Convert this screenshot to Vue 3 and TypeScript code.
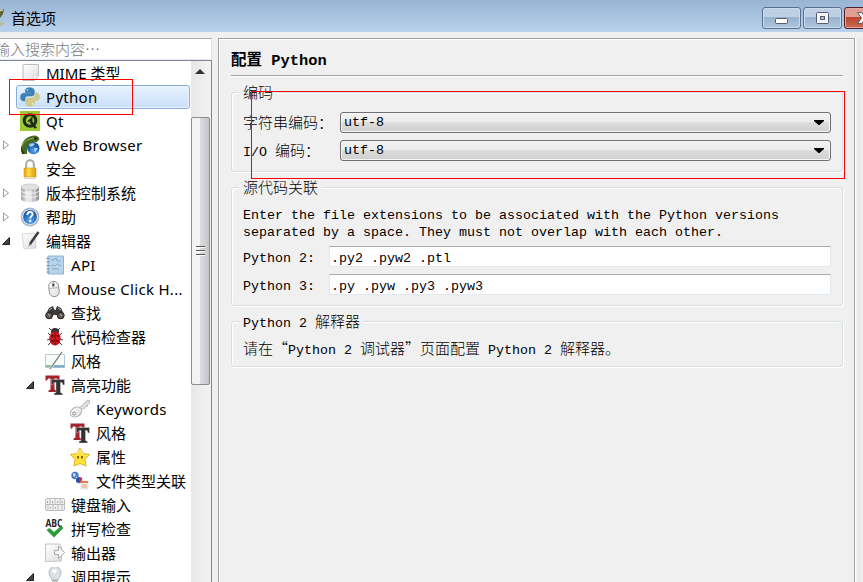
<script setup lang="ts">
import { h, type FunctionalComponent } from 'vue'

interface TreeRow {
  label: string
  icon: string
  level: number
  state?: 'open' | 'closed'
  selected?: boolean
}

const rows: TreeRow[] = [
  { label: 'MIME 类型', icon: 'page', level: 0 },
  { label: 'Python', icon: 'python', level: 0, selected: true },
  { label: 'Qt', icon: 'qt', level: 0 },
  { label: 'Web Browser', icon: 'web', level: 0, state: 'closed' },
  { label: '安全', icon: 'lock', level: 0 },
  { label: '版本控制系统', icon: 'db', level: 0, state: 'closed' },
  { label: '帮助', icon: 'help', level: 0, state: 'closed' },
  { label: '编辑器', icon: 'editor', level: 0, state: 'open' },
  { label: 'API', icon: 'api', level: 1 },
  { label: 'Mouse Click H...', icon: 'mouse', level: 1 },
  { label: '查找', icon: 'find', level: 1 },
  { label: '代码检查器', icon: 'bug', level: 1 },
  { label: '风格', icon: 'style', level: 1 },
  { label: '高亮功能', icon: 'tt', level: 1, state: 'open' },
  { label: 'Keywords', icon: 'key', level: 2 },
  { label: '风格', icon: 'tt', level: 2 },
  { label: '属性', icon: 'star', level: 2 },
  { label: '文件类型关联', icon: 'assoc', level: 2 },
  { label: '键盘输入', icon: 'keyboard', level: 1 },
  { label: '拼写检查', icon: 'spell', level: 1 },
  { label: '输出器', icon: 'export', level: 1 },
  { label: '调用提示', icon: 'bulb', level: 1, state: 'open' },
]

const isLatin = (text: string) => /^[\x20-\x7e]+$/.test(text)

const encodings = [
  { label: '字符串编码：', value: 'utf-8' },
  { label: 'I/O 编码：', value: 'utf-8' },
]
const extensions = [
  { label: 'Python 2:', value: '.py2 .pyw2 .ptl' },
  { label: 'Python 3:', value: '.py .pyw .py3 .pyw3' },
]

// Sets Latin runs in a half-width face and ideographs in a full-width one.
const MixedText: FunctionalComponent<{ text: string }> = (props) =>
  (props.text.match(/[\x20-\x7e]+|[^\x20-\x7e]+/g) ?? []).map((run) =>
    h('span', { class: isLatin(run) ? 'half' : 'full' }, run),
  )
MixedText.props = ['text']
</script>

<template>
  <div class="window">
    <svg class="defs" width="0" height="0">
      <defs>
        <linearGradient id="gPage" x1="0" y1="0" x2="1" y2="1"><stop offset="0" stop-color="#fff" /><stop offset="1" stop-color="#dedede" /></linearGradient>
        <linearGradient id="gGold" x1="0" x2="1"><stop offset="0" stop-color="#e0a30a" /><stop offset=".4" stop-color="#ffd94a" /><stop offset="1" stop-color="#d99a05" /></linearGradient>
        <linearGradient id="gGrey" x1="0" x2="1"><stop offset="0" stop-color="#a5a5a5" /><stop offset=".4" stop-color="#f0f0f0" /><stop offset="1" stop-color="#8c8c8c" /></linearGradient>
        <radialGradient id="gBlue" cx=".5" cy=".7"><stop offset="0" stop-color="#55a8f0" /><stop offset="1" stop-color="#1657a8" /></radialGradient>
        <symbol id="page" viewBox="0 0 20 20"><path d="M3 1.500h15.500v11l-4 5H3z" fill="url(#gPage)" stroke="#bdbdbd" /><path d="M18 12.500l-5-.5 1.500 5z" fill="#fff" stroke="#c8c8c8" stroke-width=".6" /></symbol>
        <symbol id="python" viewBox="0 0 20 20">
          <path d="M9.700 .8C6 .8 5.500 2.300 5.500 3.700V5.500h5v.8H3.600C1.500 6.300.6 8 .6 10.200s1 3.700 2.800 3.700H5v-2.200c0-1.700 1.300-2.800 3-2.800h4c1.400 0 2.300-1 2.300-2.300V3.700C14.300 1.800 12.500.8 9.700.8z" fill="#3d80b5" stroke="#3d80b5" stroke-width=".7" />
          <path d="M10.300 19.200c3.700 0 4.200-1.500 4.200-2.900v-1.800h-5v-.8h6.900c2.100 0 3-1.700 3-3.900s-1-3.700-2.800-3.700H15v2.200c0 1.700-1.300 2.800-3 2.800H8c-1.400 0-2.300 1-2.300 2.300v2.900c0 1.900 1.800 2.900 4.600 2.900z" fill="#d0cb8b" stroke="#d0cb8b" stroke-width=".7" />
          <circle cx="7.500" cy="3" r=".8" fill="#dcecf8" /><circle cx="12.500" cy="17" r=".8" fill="#fff" />
        </symbol>
        <symbol id="qt" viewBox="0 0 20 20"><path d="M0 0h20v20H0z" fill="#9acb35" /><circle cx="10" cy="9.500" r="5.800" fill="none" stroke="#202a18" stroke-width="3" /><path d="M12 10l5 7-2.500.5-5-6zM7 10.500l5.500-5v7.500l-2-2.200z" fill="#202a18" /></symbol>
        <symbol id="web" viewBox="0 0 20 20">
          <path d="M1 13C2 6 7 1 14 .500c3 0 5 1.500 5.500 3.500l-2.500 3-5 1c-4 2-5 6-5 11-4 0-6-2-6-6z" fill="#486b20" /><path d="M2 11c2-5 6-7 12-8" fill="none" stroke="#9cae59" /><circle cx="15.500" cy="3.500" r="1.200" fill="#111" />
          <circle cx="13.500" cy="13.300" r="6" fill="url(#gBlue)" /><path d="M9 9c2-1 5-1 6 0l-2 2-3 1zM14 13l4 0-3 5z" fill="#a5cdf2" /><path d="M1 12l4 7H2l-1-4z" fill="#263d18" />
        </symbol>
        <symbol id="lock" viewBox="0 0 20 20"><path d="M6.200 10V5a3.800 3.800 0 0 1 7.600 0v5" fill="none" stroke="#aaa" stroke-width="2" /><path d="M4 9h12v9H4z" fill="url(#gGold)" stroke="#d0a018" stroke-width=".6" /><path d="M4 19.300h12" stroke="#ccc" /></symbol>
        <symbol id="db" viewBox="0 0 20 20"><path d="M1 4v12c0 4 18 4 18 0V4z" fill="url(#gGrey)" /><ellipse cx="10" cy="4" rx="9" ry="3" fill="#e2e2e2" stroke="#b7b7b7" stroke-width=".6" /><path d="M1 8c1 3 17 3 18 0M1 12c1 3 17 3 18 0M6 6v12M11 7v12M15 6v12" fill="none" stroke="#fff" stroke-width=".7" /></symbol>
        <symbol id="help" viewBox="0 0 20 20"><circle cx="10" cy="10" r="8.800" fill="url(#gBlue)" stroke="#b3bac4" stroke-width="1.200" /><circle cx="10" cy="10" r="7.500" fill="none" stroke="#e6edf6" stroke-width="1.200" /><path d="M7.400 8c0-4 5.400-3.700 5.200-.7-.1 1.800-2.400 2-2.400 4.200" fill="none" stroke="#fff" stroke-width="1.900" /><circle cx="10.200" cy="14" r="1.200" fill="#fff" /></symbol>
        <symbol id="editor" viewBox="0 0 20 20"><path d="M2 3l13-1 1 15-12 1z" fill="url(#gPage)" stroke="#ccc" stroke-width=".7" /><path d="M18.500 1L10 13" stroke="#3c3c3c" stroke-width="2.500" /><path d="M10 12l-2 4 3.500-2.500z" fill="#777" /></symbol>
        <symbol id="api" viewBox="0 0 20 20"><path d="M3 1h15.500v18H3z" fill="#b6d4ec" stroke="#8fb3d2" /><path d="M1.500 3.500h3M1.500 7h3M1.500 10.500h3M1.500 14h3M1.500 17h3" stroke="#888" /><path d="M6 5h3l2-2 1 3h4M6 11c2-3 3 2 5-1s3 2 5 0M7 14h7" fill="none" stroke="#7396b6" stroke-width=".7" /></symbol>
        <symbol id="mouse" viewBox="0 0 20 20"><rect x="4.500" y="1.500" width="11" height="17" rx="5.300" fill="url(#gPage)" stroke="#888" transform="rotate(-7 10 10)" /><path d="M9 2v7M4.500 9.500l10-1" stroke="#999" stroke-width=".7" /><path d="M9.300 4v3" stroke="#333" stroke-width="2" /></symbol>
        <symbol id="find" viewBox="0 0 20 20"><path d="M4 5l4-2 1.500 4h1L12 3l4 2 3.500 7-1 3-5 1-2-4H8.500l-2 4-5-1-1-3z" fill="#3d3c3a" /><circle cx="4" cy="12.500" r="3.300" fill="#615b55" stroke="#222" /><circle cx="15.800" cy="12.500" r="3.300" fill="#615b55" stroke="#222" /><path d="M4 7l3-2M13 5l3 2M3 11l2 2M15 11l2 2" stroke="#aaa" /></symbol>
        <symbol id="bug" viewBox="0 0 20 20"><path d="M6 3L4 1M13 3l2-2M5 8L3 6M5 12l-3 1M6 15l-3 3M15 8l2-2M15 12l3 1M14 15l3 3" stroke="#454545" /><ellipse cx="10" cy="4.500" rx="4" ry="3.500" fill="#333" /><ellipse cx="10" cy="11.500" rx="5.700" ry="7" fill="#d3151f" /><path d="M10 5v13" stroke="#5e070d" stroke-width=".8" /><circle cx="7.300" cy="9" r="1.100" fill="#280508" /><circle cx="12.700" cy="9" r="1.100" fill="#280508" /><circle cx="7.500" cy="14" r="1" fill="#280508" /><circle cx="12.500" cy="14" r="1" fill="#280508" /></symbol>
        <symbol id="style" viewBox="0 0 20 20"><path d="M.5 3.500h19v13H.5z" fill="#f9fafa" stroke="#b8c9d2" /><path d="M8 14h11.500v2.500H8z" fill="#7fb1cd" /><path d="M1 14h5v2H1z" fill="#8bbd8d" /><path d="M17 1L5 18" stroke="#eee" stroke-width="2.500" /><path d="M17 1L5 18" stroke="#777" stroke-width="1.200" /></symbol>
        <symbol id="tt" viewBox="0 0 20 20"><path d="M.5 .5h14v5H13l-1-2H9.500v11l2 1v1.500h-8V15.500l2-1v-11H3l-1 2H.5z" fill="#a4222b" /><path d="M6.500 4.500h13v5.500H18l-1-2.500h-1.500v10l2 1v1.500H9V18.500l2-1v-10H9l-1 2.500H6.500z" fill="#333" stroke="#ddd" stroke-width=".4" /></symbol>
        <symbol id="key" viewBox="0 0 20 20"><path d="M8 10L17 1.500l2.500 0v3l-2 1 0 2-2 0-1 2-2 0-3 3z" fill="#dedede" stroke="#b0b0b0" stroke-width=".8" /><ellipse cx="6" cy="13" rx="6" ry="4.600" fill="url(#gPage)" stroke="#b4b4b4" transform="rotate(-35 6 13)" /><circle cx="4" cy="14.500" r="1.500" fill="#fff" stroke="#888" /></symbol>
        <symbol id="star" viewBox="0 0 20 20"><path d="M10 1l3 5.500 6.500 1-4.500 5 1 6.500-6-2.500L4 19l1-6.500-4.500-5L7 6.500z" fill="#ffe13b" stroke="#e2b426" stroke-linejoin="round" /><path d="M6.500 8C8 5 9 5 10 3c1 3 2 3 3.500 5" fill="none" stroke="#fff6a8" /><path d="M8 9v2.500M12 9v2.500" stroke="#594416" stroke-width="1.500" /></symbol>
        <symbol id="assoc" viewBox="0 0 20 20"><circle cx="5" cy="4.500" r="3.700" fill="#477bc6" /><path d="M3 2l3 1-1 3-2-1z" fill="#c0d9f4" /><path d="M6 6h7v7H6z" fill="#e6ecf5" /><circle cx="9" cy="9" r="3" fill="#254b9b" /><path d="M9 6a3 3 0 0 1 0 6z" fill="#c6343a" /><path d="M11 10h7v8h-7z" fill="#f0efeb" stroke="#ccc" stroke-width=".5" /><path d="M11 10h7v2h-7z" fill="#ea7942" /><path d="M12 14h5M12 16h5" stroke="#e69b7b" /></symbol>
        <symbol id="keyboard" viewBox="0 0 20 20"><rect x=".5" y="3.500" width="19" height="12" rx="1.500" fill="#f1f1f1" stroke="#bdbdbd" /><path d="M5 4v6M10 4v6M15 4v6M3 10v5M8 10v5M13 10v5M17 10v5M1 9.500h18" stroke="#bbb" /><path d="M2.500 6v2M7.500 6v2M12.500 6v2M17 6v2M5.500 12v1.500M10.500 12v1.500" stroke="#888" stroke-width=".8" /></symbol>
        <symbol id="spell" viewBox="0 0 20 20"><text x="9" y="7.500" text-anchor="middle" textLength="17" lengthAdjust="spacingAndGlyphs" font-family="Open Sans, sans-serif" font-size="10" font-weight="700" fill="#222">ABC</text><path d="M1.500 11l3-2 4.500 4 7-6 2.500 2-9.500 9.500z" fill="#2d9b3c" /></symbol>
        <symbol id="export" viewBox="0 0 20 20"><path d="M.5 1h14l2 3v14l-16 .5z" fill="url(#gPage)" stroke="#c4c4c4" /><path d="M9.500 7.500h4V3l6 6.500-6 6.500v-4.500h-4z" fill="#f7f7f7" stroke="#aaa" /></symbol>
        <symbol id="bulb" viewBox="0 0 20 20"><path d="M7 13c0-2-3-3.500-3-7.500a6 6 0 0 1 12 0c0 4-3 5.500-3 7.500z" fill="#dce1e5" stroke="#b4bbc1" /><path d="M7 4c0-2 5-2 5 0l-2 3z" fill="#fff" /><path d="M7 13h6v5H7z" fill="#aaa" /><path d="M7 15h6" stroke="#fff" /></symbol>
      </defs>
    </svg>

    <header class="titlebar">
      <svg class="app-icon" viewBox="0 0 5 20"><path d="M0 4l4-2-1 5-3 4z" fill="#5c6330" /><path d="M0 4l3-1" stroke="#e6d780" /><path d="M0 16c1-2 3-2 4 0l-2 3H0z" fill="#b9bd9d" /></svg>
      <span class="title">首选项</span>
      <div class="controls">
        <span class="ctl"><svg width="36" height="19"><rect x="11.500" y="9.500" width="12" height="5" rx="1" fill="#fff" stroke="#555b6c" /></svg></span>
        <span class="ctl"><svg width="36" height="19"><rect x="11.500" y="3.500" width="12" height="11" rx="1" fill="#f6f6f6" stroke="#555b6c" /><rect x="15.500" y="7.500" width="4" height="3" fill="#a9c0dc" stroke="#555b6c" /></svg></span>
        <span class="ctl close"><svg width="45" height="19"><path d="M12.500 3.500h4l3 3.500 3-3.500h4l-5 5.500 5 5.500h-4l-3-3.500-3 3.500h-4l4-5.500z" fill="#f5f5f5" stroke="#555b6c" /></svg></span>
      </div>
    </header>

    <main class="content">
      <aside class="sidebar">
        <div class="search">输入搜索内容…</div>
        <div class="tree">
          <div class="rows">
            <div v-for="(row, i) in rows" :key="i" class="row" :class="['level' + row.level, { selected: row.selected }]">
              <span class="branch">
                <svg v-if="row.state === 'closed'" width="8" height="10"><path d="M1.500 1v8l5-4z" fill="#fff" stroke="#9b9b9b" /></svg>
                <svg v-else-if="row.state === 'open'" width="8" height="8"><path d="M7.500 .5v7h-7z" fill="#444" stroke="#222" /></svg>
              </span>
              <span class="item">
                <svg class="icon" :class="row.icon"><use :href="'#' + row.icon" /></svg>
                <span class="label" :class="{ latin: isLatin(row.label) }">{{ row.label }}</span>
              </span>
            </div>
          </div>
          <div class="scrollbar">
            <svg class="up" width="10" height="5"><path d="M0 5l5-5 5 5z" fill="#333" /></svg>
            <div class="thumb"><i /><i /><i /></div>
          </div>
        </div>
      </aside>

      <section class="panel">
        <h1><MixedText text="配置 Python" /></h1>
        <div class="rule" />

        <div class="group encoding">
          <div class="legend"><MixedText text="编码" /></div>
          <div v-for="e in encodings" :key="e.label" class="field">
            <span class="caption"><MixedText :text="e.label" /></span>
            <div class="combo"><MixedText :text="e.value" /><svg width="10" height="5"><path d="M0 0h10v1L5.500 5h-1L0 1z" /></svg></div>
          </div>
        </div>

        <div class="group assoc-group">
          <div class="legend"><MixedText text="源代码关联" /></div>
          <p><MixedText text="Enter the file extensions to be associated with the Python versions" /><br><MixedText text="separated by a space. They must not overlap with each other." /></p>
          <div v-for="e in extensions" :key="e.label" class="field">
            <span class="caption"><MixedText :text="e.label" /></span>
            <div class="input"><MixedText :text="e.value" /></div>
          </div>
        </div>

        <div class="group interp">
          <div class="legend"><MixedText text="Python 2 解释器" /></div>
          <div class="note"><MixedText text="请在“Python 2 调试器”页面配置 Python 2 解释器。" /></div>
        </div>
      </section>
      <div class="edge" />
    </main>

    <div class="mark mark-item" />
    <div class="mark mark-group" />
  </div>
</template>

<style>
body { overflow: hidden; }
</style>

<style scoped>
.window { position: relative; width: 863px; height: 582px; overflow: hidden; display: flex; flex-direction: column; background: #f0f0f0; color: #000; font: 15px 'Noto Sans CJK SC', sans-serif; }
.window * { box-sizing: border-box; }
.defs { position: absolute; }
.titlebar { height: 32px; flex: none; display: flex; background: linear-gradient(#98b4d3, #b9d1ec); }
.app-icon { width: 5px; height: 20px; margin-top: 7px; }
.title { margin-left: 6px; line-height: 36px; font-size: 15px; }
.controls { margin-left: auto; width: 101px; display: flex; gap: 2px; padding-top: 7px; }
.ctl { flex: none; width: 39px; height: 22px; border: 1px solid #596f8c; border-radius: 3px; box-shadow: inset 0 0 0 1px #cbdcef; background: linear-gradient(#bdd0e6 0 45%, #98b1ce 45%, #aec5df); }
.ctl svg { display: block; margin-left: 1px; margin-top: 1px; }
.close { width: 48px; border-color: #51202a; box-shadow: inset 0 0 0 1px #e4aaa2; background: linear-gradient(#dfa093 0 45%, #bc4529 45%, #c96c55); }
.close svg { margin-left: 0; }
.content { flex: 1; min-height: 0; display: flex; padding-top: 6px; }
.sidebar { width: 212px; flex: none; display: flex; flex-direction: column; }
.search { height: 22px; flex: none; border: 1px solid #abadb3; border-left: 0; border-right-color: #dbe2e8; border-bottom-color: #e3e9ef; background: #fff; color: #777; font-weight: 300; line-height: 20px; text-indent: -5px; white-space: nowrap; }
.tree { flex: 1; min-height: 0; display: flex; border-top: 1px solid #828790; border-right: 1px solid #828790; background: #fff; overflow: hidden; }
.rows { width: 191px; flex: none; }
.row { height: 24px; display: flex; align-items: center; white-space: nowrap; }
.branch { flex: none; width: 16px; padding-left: 2px; display: flex; align-items: center; }
.level1 .branch { width: 41px; padding-left: 26px; }
.level2 .branch { width: 66px; padding-left: 51px; }
.item { flex: 1; height: 24px; display: flex; align-items: center; padding-left: 4px; margin-right: 1px; border: 0 solid transparent; }
.selected .item { border: 1px solid #84acdd; border-radius: 3px; padding-left: 3px; box-shadow: inset 0 0 0 1px #ebf4fe; background: linear-gradient(#e8f2fd, #c9e0fb); }
.icon { width: 20px; height: 20px; flex: none; margin-right: 6px; }
.icon.mouse { width: 18px; margin-right: 4px; }
.label { font: 15px/24px 'Noto Sans', 'Noto Sans CJK SC', sans-serif; }
.label.latin { letter-spacing: .3px; }
.scrollbar { width: 20px; flex: none; background: linear-gradient(90deg, #e7e7e7, #f3f3f3); display: flex; flex-direction: column; align-items: flex-start; padding-top: 8px; }
.thumb { width: 19px; height: 268px; margin-top: 43px; flex: none; border: 1px solid #8c8c8c; border-radius: 2px; background: linear-gradient(90deg, #f3f3f3 0 45%, #dcdcdf 50%, #c3c4c9); display: flex; flex-direction: column; align-items: center; justify-content: center; gap: 2px; }
.up { display: block; flex: none; margin-left: 4px; }
.thumb i { width: 9px; height: 2px; background: #fff; border-top: 1px solid #555; }
.panel { width: 637px; flex: none; margin-left: 6px; padding: 0 11px 0 12px; border: 1px solid #a0a0a0; border-bottom: 0; box-shadow: inset 1px 1px #fff, 1px 0 #fff; }
.edge { flex: 1; margin-left: 3px; background: linear-gradient(90deg, #e6e6e6, #efefef); }
.panel :deep(.half) { font-family: 'Liberation Mono', monospace; font-size: 13.333px; white-space: pre; }
.panel :deep(.full) { font-family: 'Noto Sans CJK SC', sans-serif; font-size: 15px; font-weight: 300; }
.panel h1 { margin: 0; height: 36px; line-height: 38px; font-size: 15px; white-space: nowrap; }
.panel h1 :deep(.half) { font-size: 15.400px; font-weight: 700; }
.panel h1 :deep(.full) { font-size: 15.500px; font-weight: 700; }
.rule { height: 2px; border-top: 1px solid #a0a0a0; background: #fff; width: 612px; }
.group { width: 612px; border: 1px solid #d5dfe5; border-radius: 3px; box-shadow: inset 1px 1px #fff, 1px 1px #fff; padding: 0 11px; }
.encoding { height: 80px; margin-top: 15px; }
.assoc-group { height: 119px; margin-top: 15px; }
.interp { height: 46px; margin-top: 15px; }
.legend { width: fit-content; height: 18px; margin: -9px 0 0 -4px; padding: 0 4px; background: #f0f0f0; line-height: 15px; white-space: nowrap; }
.field { display: flex; height: 21px; margin-bottom: 7px; line-height: 19px; white-space: nowrap; }
.encoding .field:nth-child(2) { margin-top: 10px; }
.caption { flex: none; width: 97px; }
.assoc-group .caption { width: 86px; }
.combo { width: 491px; border: 1px solid #707070; border-radius: 3px; box-shadow: inset 0 0 0 1px #f6f6f6; background: linear-gradient(#f2f2f2, #ebebeb 48%, #dddddd 50%, #cfcfcf); padding: 0 6px 0 3px; display: flex; align-items: center; justify-content: space-between; line-height: 19px; }
.group p { margin: 10px 0 5px; height: 34px; font: 13.333px/17px 'Liberation Mono', monospace; white-space: nowrap; }
.input { width: 502px; border: 1px solid #e2e9ef; border-top-color: #abadb3; background: #fff; padding-left: 1px; line-height: 17px; }
.note { margin-top: 9px; line-height: 16px; white-space: nowrap; }
.mark { position: absolute; border: 1px solid #f00; pointer-events: none; }
.mark-item { left: 9px; top: 79px; width: 124px; height: 36px; }
.mark-group { left: 251px; top: 91px; width: 594px; height: 88px; }
</style>
